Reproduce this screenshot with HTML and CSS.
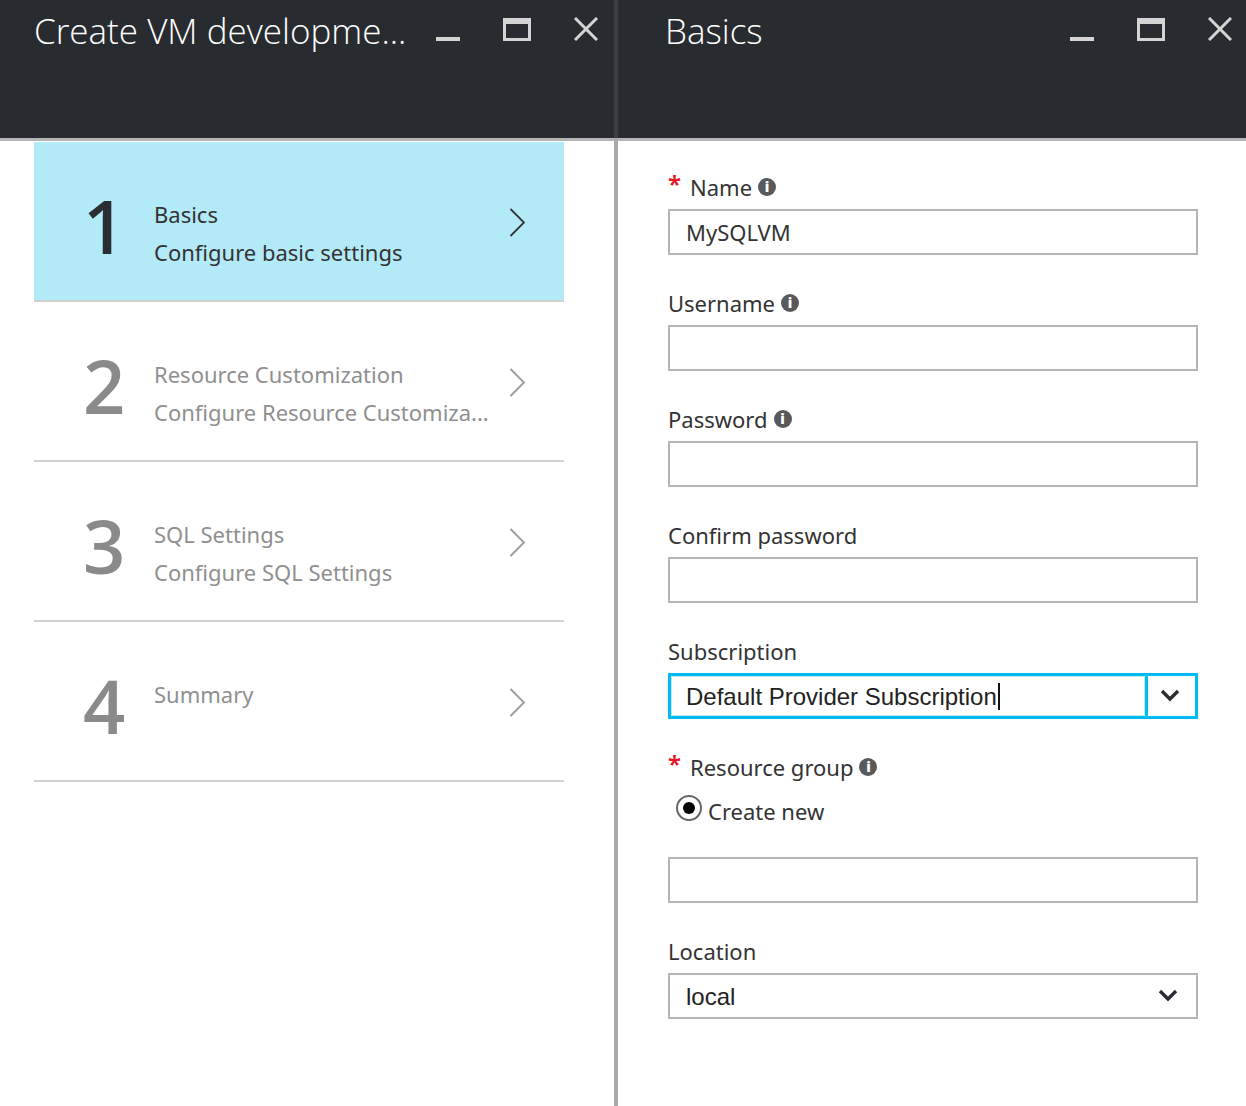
FILE: index.html
```html
<!DOCTYPE html>
<html>
<head>
<meta charset="utf-8">
<link rel="stylesheet" href="styles.css">
</head>
<body>
<div class="app">
  <section class="blade blade-left">
    <header class="blade-header">
      <h1 class="blade-title">Create VM developme...</h1>
      <div class="win-controls">
        <span class="ctl-min"></span>
        <span class="ctl-max"></span>
        <svg class="ctl-close" width="24" height="24" viewBox="0 0 24 24"><path d="M1 1 L23 23 M23 1 L1 23" stroke="#d4d4d4" stroke-width="3" fill="none"/></svg>
      </div>
    </header>
    <div class="steps">
      <div class="step active">
        <div class="step-num">1</div>
        <div class="step-text">
          <div class="step-title">Basics</div>
          <div class="step-sub">Configure basic settings</div>
        </div>
        <svg class="step-chev" width="16" height="30" viewBox="0 0 16 30"><path d="M1.5 1 L15 14.5 L1.5 28" stroke="currentColor" stroke-width="1.8" fill="none"/></svg>
      </div>
      <div class="step">
        <div class="step-num">2</div>
        <div class="step-text">
          <div class="step-title">Resource Customization</div>
          <div class="step-sub">Configure Resource Customiza...</div>
        </div>
        <svg class="step-chev" width="16" height="30" viewBox="0 0 16 30"><path d="M1.5 1 L15 14.5 L1.5 28" stroke="currentColor" stroke-width="1.8" fill="none"/></svg>
      </div>
      <div class="step">
        <div class="step-num">3</div>
        <div class="step-text">
          <div class="step-title">SQL Settings</div>
          <div class="step-sub">Configure SQL Settings</div>
        </div>
        <svg class="step-chev" width="16" height="30" viewBox="0 0 16 30"><path d="M1.5 1 L15 14.5 L1.5 28" stroke="currentColor" stroke-width="1.8" fill="none"/></svg>
      </div>
      <div class="step">
        <div class="step-num">4</div>
        <div class="step-text">
          <div class="step-title">Summary</div>
        </div>
        <svg class="step-chev" width="16" height="30" viewBox="0 0 16 30"><path d="M1.5 1 L15 14.5 L1.5 28" stroke="currentColor" stroke-width="1.8" fill="none"/></svg>
      </div>
    </div>
  </section>
  <div class="splitter"></div>
  <section class="blade blade-right">
    <header class="blade-header">
      <h1 class="blade-title">Basics</h1>
      <div class="win-controls">
        <span class="ctl-min"></span>
        <span class="ctl-max"></span>
        <svg class="ctl-close" width="24" height="24" viewBox="0 0 24 24"><path d="M1 1 L23 23 M23 1 L1 23" stroke="#d4d4d4" stroke-width="3" fill="none"/></svg>
      </div>
    </header>
    <div class="form">
      <div class="field">
        <div class="label"><span class="req">*</span>Name<span class="info">i</span></div>
        <div class="input"><span class="val">MySQLVM</span></div>
      </div>
      <div class="field">
        <div class="label">Username<span class="info">i</span></div>
        <div class="input"></div>
      </div>
      <div class="field">
        <div class="label">Password<span class="info">i</span></div>
        <div class="input"></div>
      </div>
      <div class="field">
        <div class="label">Confirm password</div>
        <div class="input"></div>
      </div>
      <div class="field">
        <div class="label">Subscription</div>
        <div class="combo focused">
          <div class="combo-text"><span class="val arial">Default Provider Subscription</span><span class="caret"></span></div>
          <div class="combo-btn"><svg width="20" height="14" viewBox="0 0 20 14"><path d="M2 2 L10 10 L18 2" stroke="#2a2e33" stroke-width="3.4" fill="none"/></svg></div>
        </div>
      </div>
      <div class="field">
        <div class="label"><span class="req">*</span>Resource group<span class="info">i</span></div>
        <div class="radio-row"><span class="radio"><span class="dot"></span></span><span class="radio-label">Create new</span></div>
        <div class="input"></div>
      </div>
      <div class="field">
        <div class="label">Location</div>
        <div class="select"><span class="val arial">local</span><svg width="20" height="14" viewBox="0 0 20 14"><path d="M2 2 L10 10 L18 2" stroke="#2a2e33" stroke-width="3.4" fill="none"/></svg></div>
      </div>
    </div>
  </section>
</div>
</body>
</html>
```
FILE: styles.css
```css
html, body {
  margin: 0;
  padding: 0;
  background: #ffffff;
}
body {
  font-family: "Noto Sans", "Open Sans", sans-serif;
  color: #333;
}
.app {
  display: flex;
  width: 1246px;
  height: 1106px;
  overflow: hidden;
}
.blade {
  display: flex;
  flex-direction: column;
}
.blade-left {
  width: 614px;
}
.blade-right {
  flex: 1;
}
.splitter {
  width: 4px;
  background: linear-gradient(#3a3e43 0 138px, #ababab 138px);
}
.blade-header {
  height: 138px;
  border-bottom: 3px solid #b5b5b5;
  background: #282c31;
  display: flex;
  align-items: flex-start;
  justify-content: space-between;
  box-sizing: content-box;
}
.blade-left .blade-header {
  padding: 0 16px 0 34px;
}
.blade-right .blade-header {
  padding: 0 14px 0 47px;
}
.blade-title {
  margin: 0;
  font-family: "Open Sans", "Noto Sans", sans-serif;
  font-weight: 300;
  font-size: 35px;
  line-height: 1;
  color: #ffffff;
  padding-top: 13px;
  white-space: nowrap;
}
.win-controls {
  display: flex;
  align-items: flex-start;
  gap: 43px;
  padding-top: 17px;
}
.ctl-min {
  display: block;
  width: 24px;
  height: 4px;
  margin-top: 20px;
  background: #d4d4d4;
}
.ctl-max {
  display: block;
  width: 28px;
  height: 23px;
  box-sizing: border-box;
  border: 3px solid #d4d4d4;
  border-top-width: 6px;
  margin-top: 1px;
}
.ctl-close {
  display: block;
}

/* steps */
.steps {
  padding: 1px 50px 0 34px;
  display: flex;
  flex-direction: column;
}
.step {
  height: 160px;
  box-sizing: border-box;
  border-bottom: 2px solid #d0d0d0;
  display: flex;
  align-items: flex-start;
  padding-left: 49px;
  color: #8f8f8f;
}
.step.active {
  background: #b3eaf7;
  color: #2a2e33;
}
.step-num {
  width: 71px;
  font-family: "Open Sans", "Noto Sans", sans-serif;
  font-weight: 600;
  font-size: 74px;
  line-height: 1;
  margin-top: 47px;
  color: #8a8a8a;
}
.step.active .step-num {
  color: #2a2e33;
}
.step-text {
  flex: 1;
  padding-top: 53px;
  font-size: 22px;
  line-height: 38px;
  white-space: nowrap;
}
.step.active .step-text {
  color: #333;
}
.step-chev {
  margin: 66px 39px 0 0;
  color: #9a9a9a;
}
.step.active .step-chev {
  color: #333;
}

/* form */
.form {
  padding: 34px 48px 0 50px;
  display: flex;
  flex-direction: column;
  gap: 36px;
}
.field {
  display: flex;
  flex-direction: column;
}
.label {
  height: 34px;
  font-size: 22px;
  line-height: 24px;
  display: flex;
  align-items: flex-start;
  color: #333;
  white-space: nowrap;
}
.req {
  color: #e81123;
  font-size: 24px;
  line-height: 18px;
  width: 22px;
  font-weight: 600;
}
.info {
  display: inline-block;
  width: 18px;
  height: 18px;
  border-radius: 50%;
  background: #58595b;
  color: #fff;
  font-family: "Open Sans", sans-serif;
  font-weight: 800;
  font-size: 14px;
  line-height: 18px;
  text-align: center;
  margin: 3px 0 0 6px;
}
.input, .select {
  height: 46px;
  box-sizing: border-box;
  border: 2px solid #b4b4b4;
  display: flex;
  align-items: center;
  padding-left: 16px;
  font-size: 22px;
  color: #333;
}
.select {
  justify-content: space-between;
  padding-right: 18px;
}
.arial {
  font-family: "Liberation Sans", Arial, sans-serif;
  font-size: 24px;
  color: #222;
  padding-top: 2px;
}
.combo {
  height: 46px;
  box-sizing: border-box;
  border: 3px solid #00bcf2;
  display: flex;
}
.combo-text {
  flex: 1;
  display: flex;
  align-items: center;
  padding-left: 15px;
  box-shadow: inset 0 0 0 1px #bfe9f7;
  border-right: 3px solid #00bcf2;
}
.caret {
  display: inline-block;
  width: 2px;
  height: 27px;
  background: #111;
  margin-left: 1px;
}
.combo-btn {
  width: 47px;
  display: flex;
  align-items: center;
  justify-content: center;
  padding-right: 4px;
  box-sizing: border-box;
}
.radio-row {
  height: 68px;
  display: flex;
  align-items: flex-start;
  padding-left: 8px;
  padding-top: 6px;
  box-sizing: border-box;
}
.radio {
  width: 26px;
  height: 26px;
  box-sizing: border-box;
  border: 2px solid #666;
  border-radius: 50%;
  display: flex;
  align-items: center;
  justify-content: center;
}
.dot {
  width: 12px;
  height: 12px;
  border-radius: 50%;
  background: #000;
}
.radio-label {
  font-size: 22px;
  line-height: 26px;
  margin-left: 6px;
  margin-top: 3px;
  color: #333;
}
```
